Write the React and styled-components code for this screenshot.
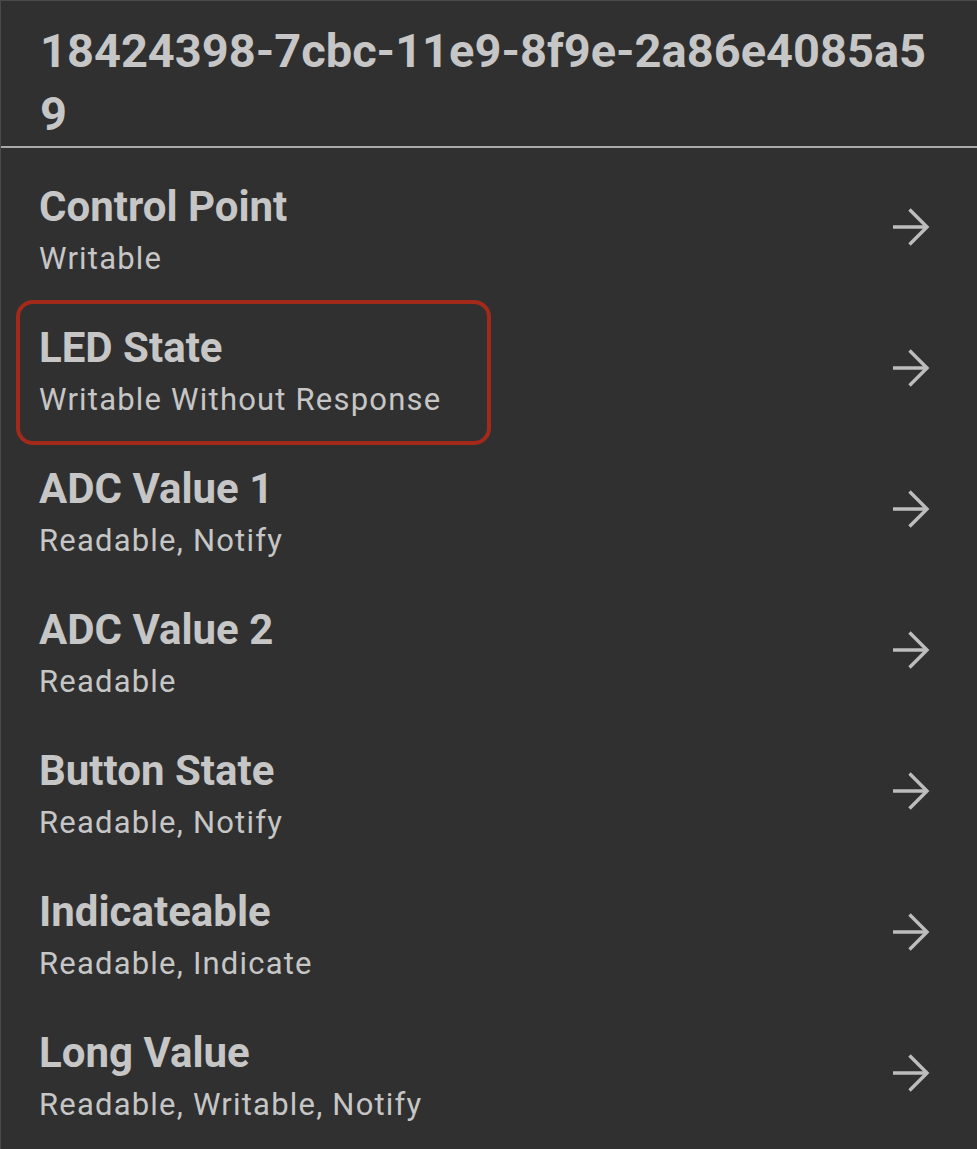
import React from 'react'
import styled, { createGlobalStyle } from 'styled-components'

const GlobalStyle = createGlobalStyle`
  html, body {
    margin: 0;
    padding: 0;
    background: #303030;
  }
  body {
    font-family: Roboto, "Noto Sans", sans-serif;
  }
`

const Screen = styled.div`
  box-sizing: border-box;
  width: 977px;
  min-height: 1149px;
  background: #303030;
  border-top: 1px solid #4a4a4a;
  border-left: 1px solid #4a4a4a;
  color: #c6c6c6;
`

const Header = styled.div`
  padding: 18px 45px 1px 39px;
  font-size: 47px;
  font-weight: 700;
  line-height: 63px;
  word-break: break-all;
  border-bottom: 2px solid #a9a9a9;
`

const List = styled.div`
  display: flex;
  flex-direction: column;
`

const Row = styled.div`
  position: relative;
  box-sizing: border-box;
  height: 141px;
  display: flex;
  align-items: flex-start;
  justify-content: space-between;
  padding: 34px 47px 0 38px;
`

const Texts = styled.div`
  display: flex;
  flex-direction: column;
`

const Title = styled.div`
  font-size: 42px;
  font-weight: 700;
  line-height: 50px;
`

const Subtitle = styled.div`
  margin-top: 7px;
  font-size: 31px;
  font-weight: 400;
  line-height: 40px;
  letter-spacing: 1.2px;
`

const ArrowBox = styled.div`
  margin-top: 26px;
  display: flex;
`

const Highlight = styled.div`
  position: absolute;
  left: 15px;
  top: 11px;
  width: 475px;
  height: 145px;
  box-sizing: border-box;
  border: 4px solid #a32a1b;
  border-radius: 17px;
  pointer-events: none;
`

const Arrow = () => (
  <svg width="38" height="38" viewBox="0 0 38 38" fill="none" stroke="#bdbdbd" strokeWidth="3.4">
    <line x1="1" y1="19" x2="35" y2="19" />
    <polyline points="17.5,1.5 35,19 17.5,36.5" />
  </svg>
)

const items = [
  { name: 'Control Point', props: 'Writable' },
  { name: 'LED State', props: 'Writable Without Response', marked: true },
  { name: 'ADC Value 1', props: 'Readable, Notify' },
  { name: 'ADC Value 2', props: 'Readable' },
  { name: 'Button State', props: 'Readable, Notify' },
  { name: 'Indicateable', props: 'Readable, Indicate' },
  { name: 'Long Value', props: 'Readable, Writable, Notify' },
]

export default function App() {
  return (
    <>
      <GlobalStyle />
      <Screen>
        <Header>18424398-7cbc-11e9-8f9e-2a86e4085a59</Header>
        <List>
          {items.map((item) => (
            <Row key={item.name}>
              {item.marked && <Highlight />}
              <Texts>
                <Title>{item.name}</Title>
                <Subtitle>{item.props}</Subtitle>
              </Texts>
              <ArrowBox>
                <Arrow />
              </ArrowBox>
            </Row>
          ))}
        </List>
      </Screen>
    </>
  )
}
